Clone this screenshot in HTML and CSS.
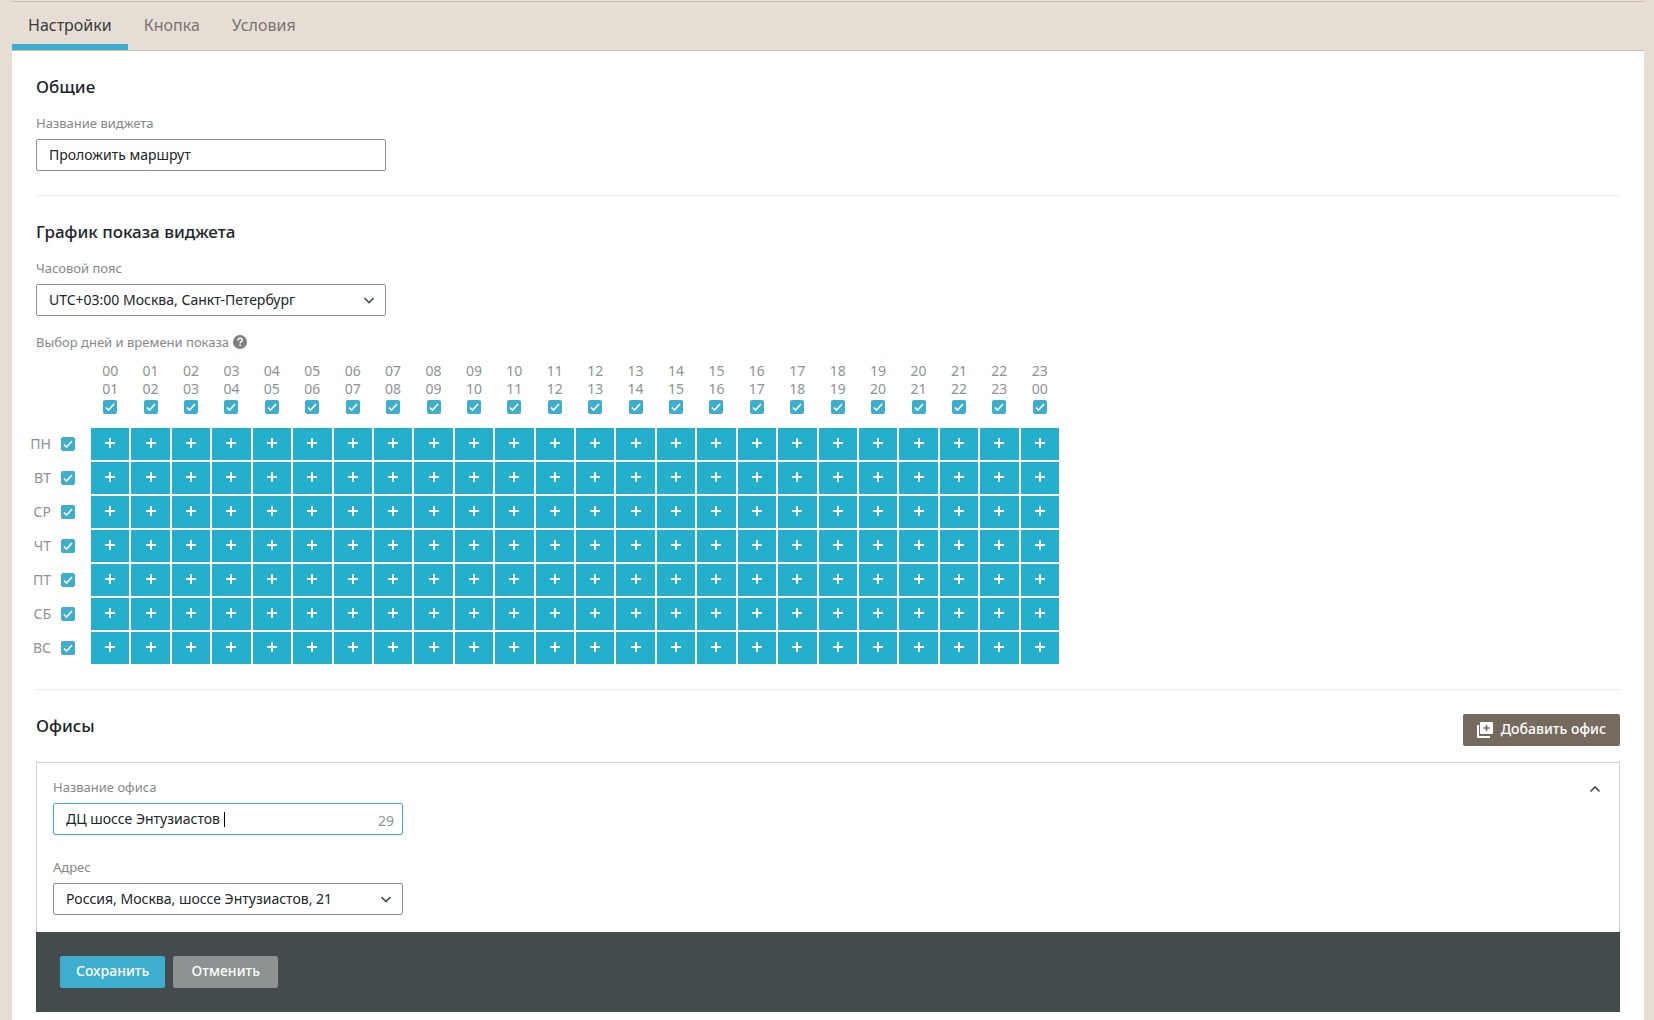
FILE: index.html
```
<!DOCTYPE html>
<html lang="ru">
<head>
<meta charset="utf-8">
<title>Настройки виджета</title>
<meta name="viewport" content="width=device-width, initial-scale=1">
<link rel="stylesheet" href="styles.css">
</head>
<body>
<nav class="tabs">
  <a class="tab tab-active" href="#settings">Настройки</a>
  <a class="tab" href="#button">Кнопка</a>
  <a class="tab" href="#terms">Условия</a>
</nav>
<main class="panel" id="settings">
  <section class="section">
    <h2 class="title">Общие</h2>
    <div class="field">
      <label class="label" for="widget-name">Название виджета</label>
      <div class="control"><input class="value" id="widget-name" type="text" value="Проложить маршрут"></div>
    </div>
  </section>

  <section class="section">
    <h2 class="title">График показа виджета</h2>
    <div class="field">
      <label class="label" for="timezone">Часовой пояс</label>
      <div class="control">
        <select class="value" id="timezone"><option>UTC+03:00 Москва, Санкт-Петербург</option></select>
        <svg class="chevron" viewBox="0 0 12 8" aria-hidden="true"><path d="M1.500 2 6 6.500 10.500 2"/></svg>
      </div>
    </div>
    <div class="schedule-label">
      <span class="label" id="schedule-title">Выбор дней и времени показа</span>
      <svg class="help" viewBox="0 0 14 14" aria-hidden="true"><circle cx="7" cy="7" r="7"/><path d="M4.900 5.600C4.900 4.100 5.800 3.300 7 3.300s2.200.8 2.200 1.900c0 1.400-2.100 1.600-2.100 3.100M7.100 9.600v1.500"/></svg>
    </div>
    <table class="schedule" aria-labelledby="schedule-title">
      <thead id="hours"></thead>
      <tbody id="days"></tbody>
    </table>
  </section>

  <section class="section section-last">
    <div class="section-head">
      <h2 class="title">Офисы</h2>
      <button class="btn btn-add" type="button">
        <svg class="add-icon" viewBox="0 0 16 16" aria-hidden="true"><path d="M0 3h2v11h11v2H0z"/><path fill-rule="evenodd" d="M4 0h11a1 1 0 0 1 1 1v10a1 1 0 0 1-1 1H4a1 1 0 0 1-1-1V1a1 1 0 0 1 1-1zm4.700 3v2.200H6.500v1.600h2.200V9h1.600V6.800h2.200V5.200h-2.200V3z"/></svg>
        Добавить офис
      </button>
    </div>
    <div class="office">
      <div class="office-fields">
        <div class="field">
          <label class="label" for="office-name">Название офиса</label>
          <div class="control control-focus">
            <input class="value value-fit" id="office-name" type="text" value="ДЦ шоссе Энтузиастов ">
            <span class="caret"></span>
            <span class="counter">29</span>
          </div>
        </div>
        <div class="field">
          <label class="label" for="address">Адрес</label>
          <div class="control">
            <select class="value" id="address"><option>Россия, Москва, шоссе Энтузиастов, 21</option></select>
            <svg class="chevron" viewBox="0 0 12 8" aria-hidden="true"><path d="M1.500 2 6 6.500 10.500 2"/></svg>
          </div>
        </div>
      </div>
      <button class="collapse" type="button" aria-label="Свернуть">
        <svg class="chevron" viewBox="0 0 12 8" aria-hidden="true"><path d="M1.500 6.500 6 2l4.500 4.500"/></svg>
      </button>
    </div>
  </section>

  <div class="actions">
    <button class="btn btn-save" type="submit">Сохранить</button>
    <button class="btn btn-cancel" type="button">Отменить</button>
  </div>
</main>
<script src="schedule.js"></script>
</body>
</html>
```
FILE: styles.css
```
* {
  box-sizing: border-box;
}

body {
  margin: 0;
  padding: 1px 10px 0 12px;
  min-height: 100vh;
  display: flex;
  flex-direction: column;
  background: #e6ded5;
  color: #212529;
  font: 14px/20px "Noto Sans", "Open Sans", sans-serif;
}

input,
select,
button {
  margin: 0;
  font: inherit;
  color: inherit;
}

.tabs {
  display: flex;
  border-top: 1px solid #c9bcaa;
  border-bottom: 1px solid #c9bcaa;
}

.tab {
  padding: 11px 16px 7px;
  border-bottom: 6px solid transparent;
  color: #7b746d;
  font-size: 16px;
  line-height: 24px;
  text-decoration: none;
}

.tab-active {
  border-color: #3daecd;
  color: #3a3a3a;
}

.panel {
  flex: 1;
  padding: 0 24px 8px;
  background: #fff;
}

.section {
  padding: 24px 0;
  border-bottom: 1px solid #ececec;
}

.section-last {
  padding-bottom: 0;
  border-bottom: 0;
}

.title {
  margin: 0 0 14px;
  font-size: 17px;
  font-weight: 500;
  line-height: 24px;
}

.field {
  display: flex;
  flex-direction: column;
  gap: 6px;
  max-width: 350px;
}

.label {
  color: #85878a;
  font-size: 13px;
}

.control {
  display: flex;
  align-items: center;
  height: 32px;
  padding: 0 12px;
  border: 1px solid #8d9293;
  border-radius: 2px;
  background: #fff;
}

.control-focus {
  border-color: #3daecd;
}

.value {
  flex: 1;
  min-width: 0;
  padding: 0;
  border: 0;
  outline: 0;
  background: none;
  appearance: none;
}

.value-fit {
  flex: none;
  field-sizing: content;
}

.caret {
  width: 1px;
  height: 15px;
  background: #000;
}

.counter {
  margin-left: auto;
  padding-top: 4px;
  margin-right: -4px;
  color: #919596;
}

.chevron {
  width: 12px;
  height: 8px;
  fill: none;
  stroke: #444b4c;
  stroke-width: 1.600;
}

.control .chevron {
  margin-right: -2px;
}

.schedule-label {
  display: flex;
  align-items: center;
  gap: 4px;
  margin-top: 16px;
}

.help {
  width: 14px;
  height: 14px;
  fill: #808080;
}

.help path {
  fill: none;
  stroke: #fff;
  stroke-width: 1.500;
}

.schedule {
  display: block;
  max-width: 1035px;
  margin: 10px 0 1px -12px;
  color: #8d9293;
}

.schedule thead,
.schedule tbody {
  display: grid;
  gap: 2px;
}

.schedule thead {
  margin-bottom: 14px;
}

.schedule tr {
  display: grid;
  grid-template-columns: 65px repeat(24, 1fr);
  gap: 2px;
}

.schedule th,
.schedule td {
  display: block;
  padding: 0;
  font-weight: 400;
}

.hour {
  display: flex;
  flex-direction: column;
  align-items: center;
  line-height: 18px;
}

.hour .check {
  margin-top: 2px;
}

.day {
  display: flex;
  align-items: center;
  justify-content: flex-end;
  gap: 10px;
  height: 32px;
  padding-right: 14px;
}

.check {
  width: 14px;
  height: 14px;
  border-radius: 2px;
  appearance: none;
  background: #d5d8d9;
}

.check:checked {
  background: #3daecd url("data:image/svg+xml,%3Csvg xmlns='http://www.w3.org/2000/svg' viewBox='0 0 14 14'%3E%3Cpath d='M3 7.500 5.500 10 11 4' fill='none' stroke='%23fff' stroke-width='1.600'/%3E%3C/svg%3E");
}

.slot {
  display: block;
  width: 100%;
  height: 32px;
  padding: 0;
  border: 0;
  background: #e6ded5;
}

.slot-on {
  background:
    linear-gradient(#fff, #fff) 50% 10px / 2px 10px no-repeat,
    linear-gradient(#fff, #fff) 50% 14px / 10px 2px no-repeat,
    #24b0cd;
}

.section-head {
  display: flex;
  justify-content: space-between;
  align-items: flex-start;
}

.section-head .title {
  margin: 0;
}

.btn {
  height: 32px;
  padding: 0 16px 2px;
  border: 0;
  border-radius: 2px;
  color: #fff;
  font-weight: 500;
}

.btn-add {
  display: flex;
  align-items: center;
  gap: 8px;
  padding: 0 14px 2px;
  background: #756a5e;
}

.add-icon {
  width: 16px;
  height: 16px;
  margin-top: 2px;
  fill: #fff;
}

.office {
  display: flex;
  justify-content: space-between;
  align-items: flex-start;
  margin-top: 16px;
  padding: 14px 16px 17px;
  border: 1px solid #d0d0d0;
  border-bottom: 0;
}

.office-fields {
  display: flex;
  flex: 1;
  flex-direction: column;
  gap: 22px;
}

.collapse {
  display: flex;
  padding: 8px 2px;
  border: 0;
  background: none;
}

.actions {
  display: flex;
  gap: 8px;
  padding: 24px;
  background: #444b4c;
}

.btn-save,
.btn-cancel {
  min-width: 105px;
}

.btn-save {
  background: #3daecd;
}

.btn-cancel {
  background: #8d9293;
}
```
FILE: schedule.js
```
const dayNames = ["ПН", "ВТ", "СР", "ЧТ", "ПТ", "СБ", "ВС"];
const pad = (n) => String(n % 24).padStart(2, "0");
const hours = Array.from({ length: 24 }, (_, h) => h);

document.getElementById("hours").innerHTML =
  "<tr><td></td>" +
  hours.map((h) =>
    `<th scope="col"><label class="hour"><span>${pad(h)}</span><span>${pad(h + 1)}</span>` +
    `<input class="check" type="checkbox" checked></label></th>`).join("") +
  "</tr>";

document.getElementById("days").innerHTML = dayNames.map((name) =>
  `<tr><th scope="row"><label class="day">${name}<input class="check" type="checkbox" checked></label></th>` +
  hours.map((h) =>
    `<td><button class="slot slot-on" type="button" aria-pressed="true" aria-label="${name} ${pad(h)}–${pad(h + 1)}"></button></td>`).join("") +
  "</tr>").join("");
```
